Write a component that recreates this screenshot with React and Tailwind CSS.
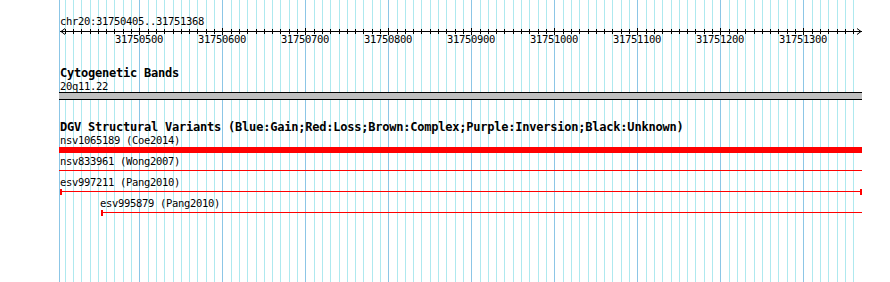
import React from "react";

// view: chr20:31750405..31751368, drawn at 0.83 px per bp from x=60.45
const START = 31750405;
const X0 = 60.45;
const PX = 0.83;
const LEFT = 59; // panel left edge in page px
const xOf = (bp) => Math.round(X0 + (bp - START) * PX);

const ticks = Array.from({ length: 96 }, (_, k) => 31750410 + k * 10);
const majors = ticks.filter((bp) => bp % 100 === 0);

const small = "font-['DejaVu_Sans_Mono',monospace] text-[10.5px] tracking-[-0.32px] leading-[12px] text-black";
const bold = "font-['DejaVu_Sans_Mono',monospace] font-bold text-[12px] tracking-[-0.22px] leading-[13px] text-black";

function Grid() {
  return (
    <svg className="absolute left-0 top-0" width="890" height="282" shapeRendering="crispEdges">
      <line x1={LEFT + 0.5} x2={LEFT + 0.5} y1="0" y2="282" stroke="#8cc6e6" />
      {ticks.map((bp) => (
        <line
          key={bp}
          x1={xOf(bp) + 0.5}
          x2={xOf(bp) + 0.5}
          y1="0"
          y2="282"
          stroke={bp % 100 === 0 ? "#8cc6e6" : "#aee9ef"}
        />
      ))}
    </svg>
  );
}

function Ruler() {
  return (
    <svg width="803" height="18" shapeRendering="crispEdges" className="block">
      <line x1="1" x2="803" y1="3.5" y2="3.5" stroke="#000" />
      <polyline points="6,0.5 2,3.5 6,6.5" fill="none" stroke="#000" shapeRendering="auto" />
      <polyline points="798,0.5 802,3.5 798,6.5" fill="none" stroke="#000" shapeRendering="auto" />
      {ticks.map((bp) => {
        const x = xOf(bp) - LEFT + 0.5;
        const major = bp % 100 === 0;
        return <line key={bp} x1={x} x2={x} y1={major ? 0 : 1} y2={major ? 7 : 6} stroke="#000" />;
      })}
      {majors.map((bp) => (
        <text
          key={bp}
          x={xOf(bp) - LEFT}
          y="15"
          textAnchor="middle"
          fontFamily="'DejaVu Sans Mono', monospace"
          fontSize="10.5"
          letterSpacing="-0.32"
          fill="#000"
        >
          {bp}
        </text>
      ))}
    </svg>
  );
}

function Feature({ label, start = 1, thick, caps, indent = 1 }) {
  return (
    <div className="h-[21px]">
      <div className={small} style={{ paddingLeft: indent }}>{label}</div>
      <svg width="803" height="9" shapeRendering="crispEdges" className="block">
        {thick ? (
          <rect x="0" y="1" width="803" height="6" fill="#ff0000" />
        ) : (
          <>
            <line x1={start} x2="803" y1="3.5" y2="3.5" stroke="#ff0000" />
            {caps && <rect x={start} y="1" width="2" height="6" fill="#ff0000" />}
            {caps === "both" && <rect x="801" y="1" width="2" height="6" fill="#ff0000" />}
          </>
        )}
      </svg>
    </div>
  );
}

export default function App() {
  return (
    <div className="relative w-[890px] h-[282px] overflow-hidden bg-white">
      <Grid />
      <div className="relative pl-[59px] w-[862px]">
        <div className={`${small} pt-[15px] pl-px leading-[13px]`}>chr20:31750405..31751368</div>
        <Ruler />

        <div className={`${bold} mt-[21px] pl-px`}>Cytogenetic Bands</div>
        <div className={`${small} pl-px`}>20q11.22</div>
        <div className="h-[8px] border-y border-black bg-[#c0c0c0]" />

        <div className={`${bold} mt-[21px] pl-px`}>
          DGV Structural Variants (Blue:Gain;Red:Loss;Brown:Complex;Purple:Inversion;Black:Unknown)
        </div>
        <Feature label="nsv1065189 (Coe2014)" thick />
        <Feature label="nsv833961 (Wong2007)" start={0} />
        <Feature label="esv997211 (Pang2010)" caps="both" />
        <Feature label="esv995879 (Pang2010)" start={42} indent={41} caps="left" />
      </div>
    </div>
  );
}
